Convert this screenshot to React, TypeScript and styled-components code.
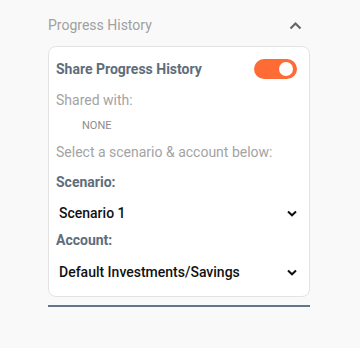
import React from 'react';
import styled, { createGlobalStyle } from 'styled-components';

const GlobalStyle = createGlobalStyle`
    body {
        margin: 0;
        background: #f9f9f9;
        font-family: Roboto, 'Liberation Sans', sans-serif;
    }
`;

const Panel = styled.div`
    width: 262px;
    padding: 15px 0 0 48px;
`;

const Header = styled.div`
    display: flex;
    align-items: center;
    justify-content: space-between;
    height: 20px;
    padding-right: 8px;
`;

const HeaderTitle = styled.div`
    font-size: 14px;
    color: #a0a0a0;
`;

const Card = styled.div`
    margin-top: 11px;
    background: #fff;
    border: 1px solid #e3e3e3;
    border-radius: 8px;
    padding: 12px 12px 9px 7px;
`;

const ShareRow = styled.div`
    display: flex;
    align-items: center;
    justify-content: space-between;
    height: 20px;
`;

const Label = styled.div<{ $top: number }>`
    margin-top: ${props => props.$top}px;
    font-size: 14px;
    line-height: 20px;
    font-weight: 700;
    color: #5e6d7c;
`;

const Muted = styled.div<{ $top: number }>`
    margin-top: ${props => props.$top}px;
    font-size: 14px;
    line-height: 20px;
    color: #a3a3a3;
`;

const NoneText = styled.div`
    margin-top: 8px;
    padding-left: 26px;
    font-size: 11px;
    line-height: 16px;
    color: #8c8c8c;
    text-transform: uppercase;
`;

const Toggle = styled.div<{ $on: boolean }>`
    width: 43px;
    height: 20px;
    border-radius: 10px;
    background: ${props => (props.$on ? '#ff6b35' : '#ccc')};
    display: flex;
    align-items: center;
    justify-content: ${props => (props.$on ? 'flex-end' : 'flex-start')};
    padding: 0 4px;
    box-sizing: border-box;
`;

const Knob = styled.span`
    width: 14px;
    height: 14px;
    border-radius: 50%;
    background: #fff;
`;

const SelectBox = styled.div<{ $top: number }>`
    margin-top: ${props => props.$top}px;
    display: flex;
    align-items: center;
    justify-content: space-between;
    height: 30px;
    padding: 0 0 0 3px;
    font-size: 14px;
    font-weight: 500;
    color: #111;
    cursor: pointer;
`;

const Divider = styled.div`
    margin-top: 8px;
    height: 2px;
    background: #66768a;
`;

const ChevronUp = () => (
    <svg width="13" height="9" viewBox="0 0 13 9">
        <path d="M1.5 7.5 L6.5 2.5 L11.5 7.5" fill="none" stroke="#666" strokeWidth="2.2" />
    </svg>
);

const ChevronDown = () => (
    <svg width="10" height="7" viewBox="0 0 10 7">
        <path d="M1 1.5 L5 5.3 L9 1.5" fill="none" stroke="#111" strokeWidth="2" />
    </svg>
);

const App = () => {
    return (
        <>
            <GlobalStyle />
            <Panel>
                <Header>
                    <HeaderTitle>Progress History</HeaderTitle>
                    <ChevronUp />
                </Header>
                <Card>
                    <ShareRow>
                        <Label $top={0}>Share Progress History</Label>
                        <Toggle $on>
                            <Knob />
                        </Toggle>
                    </ShareRow>
                    <Muted $top={11}>Shared with:</Muted>
                    <NoneText>None</NoneText>
                    <Muted $top={8}>Select a scenario &amp; account below:</Muted>
                    <Label $top={10}>Scenario:</Label>
                    <SelectBox $top={6}>
                        <span>Scenario 1</span>
                        <ChevronDown />
                    </SelectBox>
                    <Label $top={2}>Account:</Label>
                    <SelectBox $top={7}>
                        <span>Default Investments/Savings</span>
                        <ChevronDown />
                    </SelectBox>
                </Card>
                <Divider />
            </Panel>
        </>
    );
};

export default App;
